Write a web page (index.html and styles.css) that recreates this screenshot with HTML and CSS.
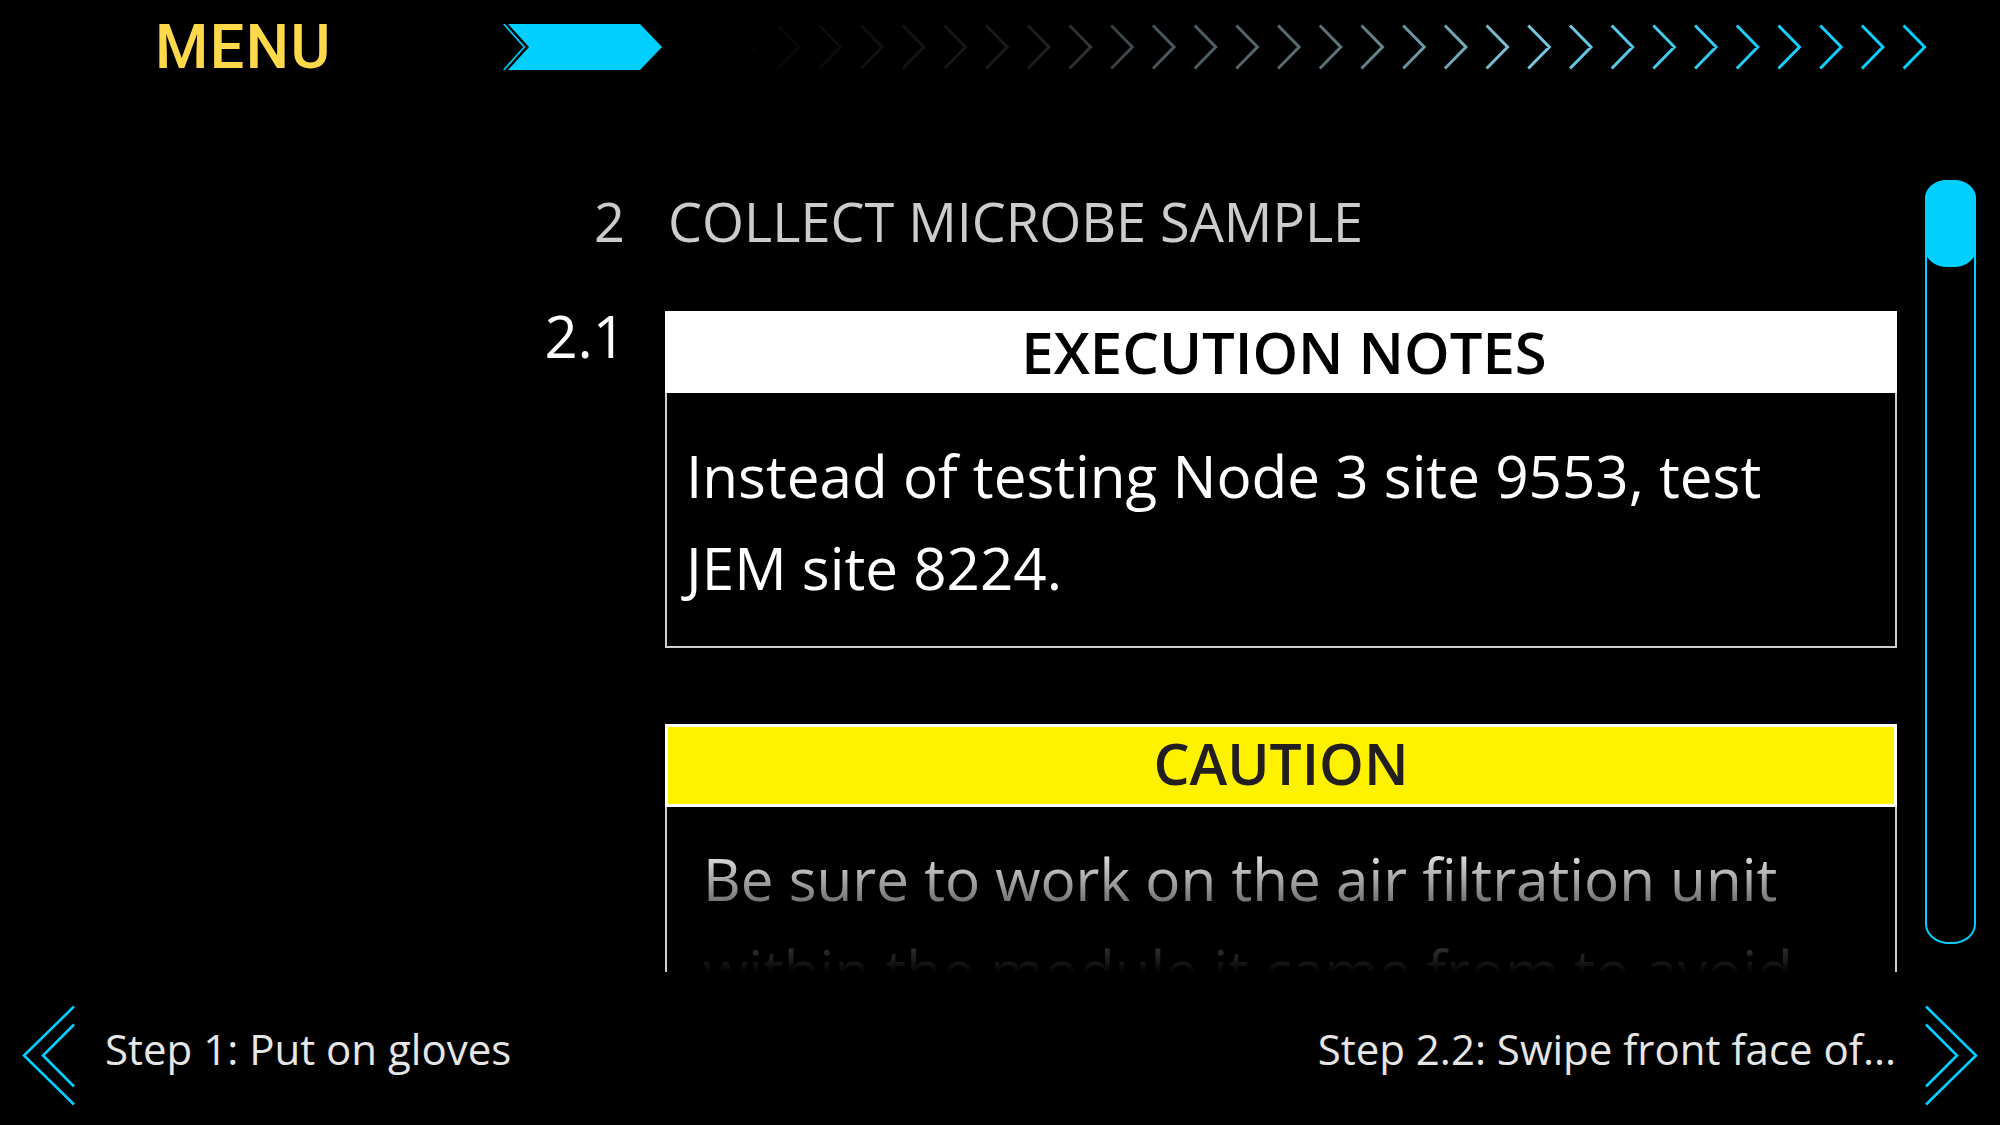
FILE: index.html
```html
<!DOCTYPE html>
<html lang="en">
<head>
<meta charset="utf-8">
<title>Procedure</title>
<link rel="stylesheet" href="styles.css">
</head>
<body>
<div class="screen">
  <header class="topbar">
    <div class="menu">MENU</div>
    <svg class="current" width="160" height="46" viewBox="0 0 160 46">
      <polygon points="5,0 137,0 159,23 137,46 5,46 26,23" fill="#00CFFF"/>
      <polyline points="0.8,0 21.3,23 0.8,46" fill="none" stroke="#00CFFF" stroke-width="1.6"/>
    </svg>
    <svg class="progress" width="1195" height="46" viewBox="0 0 1195 46">
      <defs>
        <linearGradient id="fade" gradientUnits="userSpaceOnUse" x1="0" y1="0" x2="1195" y2="0">
          <stop offset="0" stop-color="#000000"/>
          <stop offset="0.04" stop-color="#080808"/>
          <stop offset="0.25" stop-color="#1c1c1c"/>
          <stop offset="0.36" stop-color="#4a585e"/>
          <stop offset="0.5" stop-color="#5e7178"/>
          <stop offset="0.66" stop-color="#7ec6dc"/>
          <stop offset="0.84" stop-color="#22ccf4"/>
          <stop offset="1" stop-color="#00CFFF"/>
        </linearGradient>
      </defs>
      <path fill="none" stroke="url(#fade)" stroke-width="3" d="M1 1.5L22 23L1 44.5M42.7 1.5L63.7 23L42.7 44.5M84.4 1.5L105.4 23L84.4 44.5M126.1 1.5L147.1 23L126.1 44.5M167.8 1.5L188.8 23L167.8 44.5M209.5 1.5L230.5 23L209.5 44.5M251.2 1.5L272.2 23L251.2 44.5M292.9 1.5L313.9 23L292.9 44.5M334.6 1.5L355.6 23L334.6 44.5M376.3 1.5L397.3 23L376.3 44.5M418 1.5L439 23L418 44.5M459.7 1.5L480.7 23L459.7 44.5M501.4 1.5L522.4 23L501.4 44.5M543.1 1.5L564.1 23L543.1 44.5M584.8 1.5L605.8 23L584.8 44.5M626.5 1.5L647.5 23L626.5 44.5M668.2 1.5L689.2 23L668.2 44.5M709.9 1.5L730.9 23L709.9 44.5M751.6 1.5L772.6 23L751.6 44.5M793.3 1.5L814.3 23L793.3 44.5M835 1.5L856 23L835 44.5M876.7 1.5L897.7 23L876.7 44.5M918.4 1.5L939.4 23L918.4 44.5M960.1 1.5L981.1 23L960.1 44.5M1001.8 1.5L1022.8 23L1001.8 44.5M1043.5 1.5L1064.5 23L1043.5 44.5M1085.2 1.5L1106.2 23L1085.2 44.5M1126.9 1.5L1147.9 23L1126.9 44.5M1168.6 1.5L1189.6 23L1168.6 44.5"/>
    </svg>
  </header>

  <main class="main">
    <div class="scroll">
      <div class="row section">
        <div class="num section-num">2</div>
        <h1 class="section-title">COLLECT MICROBE SAMPLE</h1>
      </div>
      <div class="row step">
        <div class="num step-num">2.1</div>
        <div class="cards">
          <section class="card notes">
            <h2 class="card-head">EXECUTION NOTES</h2>
            <div class="card-body"><p>Instead of testing Node 3 site 9553, test JEM site 8224.</p></div>
          </section>
          <section class="card caution">
            <h2 class="card-head">CAUTION</h2>
            <div class="card-body"><p>Be sure to work on the air filtration unit within the module it came from to avoid</p></div>
          </section>
        </div>
      </div>
    </div>
    <div class="scrollbar"><div class="thumb"></div></div>
  </main>

  <footer class="footer">
    <div class="nav prev">
      <svg width="54" height="110" viewBox="0 0 54 110">
        <path d="M52 9.5L2 58.5L52 107.5M52 27.5L21 58.5L52 89.5" fill="none" stroke="#00CFFF" stroke-width="2.6"/>
      </svg>
      <span>Step 1: Put on gloves</span>
    </div>
    <div class="nav next">
      <span>Step 2.2: Swipe front face of...</span>
      <svg width="54" height="110" viewBox="0 0 54 110">
        <path d="M2 9.5L52 58.5L2 107.5M2 27.5L33 58.5L2 89.5" fill="none" stroke="#00CFFF" stroke-width="2.6"/>
      </svg>
    </div>
  </footer>
</div>
</body>
</html>
```

FILE: styles.css
```css
html, body {
  margin: 0;
  padding: 0;
  background: #000;
}

.screen {
  width: 2000px;
  height: 1125px;
  display: flex;
  flex-direction: column;
  background: #000;
  font-family: "Open Sans", "Noto Sans", sans-serif;
  color: #fff;
  overflow: hidden;
}

/* ---------- top bar ---------- */
.topbar {
  height: 94px;
  flex: none;
  display: flex;
  align-items: center;
  padding-left: 155px;
}

.menu {
  width: 348px;
  font-family: Roboto, "Noto Sans", sans-serif;
  font-weight: 500;
  font-size: 61px;
  line-height: 61px;
  color: #FFD94A;
  letter-spacing: 1.5px;
}

.current {
  display: block;
  flex: none;
}

.progress {
  display: block;
  flex: none;
  margin-left: 72px;
}

/* ---------- main ---------- */
.main {
  height: 878px;
  flex: none;
  display: flex;
  align-items: flex-start;
}

.scroll {
  width: 1897px;
  height: 878px;
  overflow: hidden;
  flex: none;
}

.row {
  display: grid;
  grid-template-columns: 622px 1232px;
  column-gap: 43px;
}

.num {
  text-align: right;
  font-weight: 400;
}

.section {
  padding-top: 100px;
  padding-left: 3px;
}

.section-num,
.section-title {
  font-size: 54px;
  line-height: 54px;
  color: #cccccc;
  font-weight: 400;
}

.section-title {
  margin: 0;
  letter-spacing: 0;
}

.step {
  margin-top: 63px;
}

.step-num {
  font-size: 58px;
  line-height: 49px;
  color: #fff;
  margin-right: -4px;
}

.cards {
  display: flex;
  flex-direction: column;
  gap: 76px;
}

.card-head {
  margin: 0;
  text-align: center;
  font-weight: 600;
  font-size: 58px;
}

.card-body {
  border: 2px solid #cfcfcf;
  border-top: none;
}

.card-body p {
  margin: 0;
  font-size: 58.4px;
  line-height: 92px;
  color: #fff;
}

.notes .card-head {
  background: #fff;
  color: #000;
  height: 82px;
  line-height: 82px;
  padding-left: 6px;
}

.notes .card-body {
  padding: 37px 37px 32px 19px;
}

.caution .card-head {
  background: #FFF200;
  color: #231f20;
  border: 3px solid #fff;
  font-size: 57px;
  line-height: 73px;
  padding-bottom: 4px;
}

.caution .card-body {
  padding: 26px 38px 0 36px;
}

.caution .card-body p {
  max-height: 140px;
  overflow: hidden;
  -webkit-mask-image: linear-gradient(to bottom, #000 0px, rgba(0,0,0,0.85) 25px, rgba(0,0,0,0.42) 72px, rgba(0,0,0,0.28) 100px, rgba(0,0,0,0.12) 125px, transparent 140px);
  mask-image: linear-gradient(to bottom, #000 0px, rgba(0,0,0,0.85) 25px, rgba(0,0,0,0.42) 72px, rgba(0,0,0,0.28) 100px, rgba(0,0,0,0.12) 125px, transparent 140px);
}

/* ---------- scrollbar ---------- */
.scrollbar {
  flex: none;
  width: 47px;
  height: 760px;
  margin: 86px 0 0 28px;
  border: 2px solid #00CFFF;
  border-radius: 24px / 20px;
}

.thumb {
  height: 87px;
  margin: -2px -2px 0;
  background: #00CFFF;
  border-radius: 22px / 18px;
}

/* ---------- footer ---------- */
.footer {
  flex: 1;
  display: flex;
  align-items: center;
  justify-content: space-between;
  padding: 0 22px;
}

.nav {
  display: flex;
  align-items: center;
  gap: 29px;
  font-size: 42px;
  line-height: 42px;
  color: #e6e6e6;
}

.nav svg {
  display: block;
  flex: none;
  margin-top: 7px;
}

.next {
  gap: 28px;
}
```
